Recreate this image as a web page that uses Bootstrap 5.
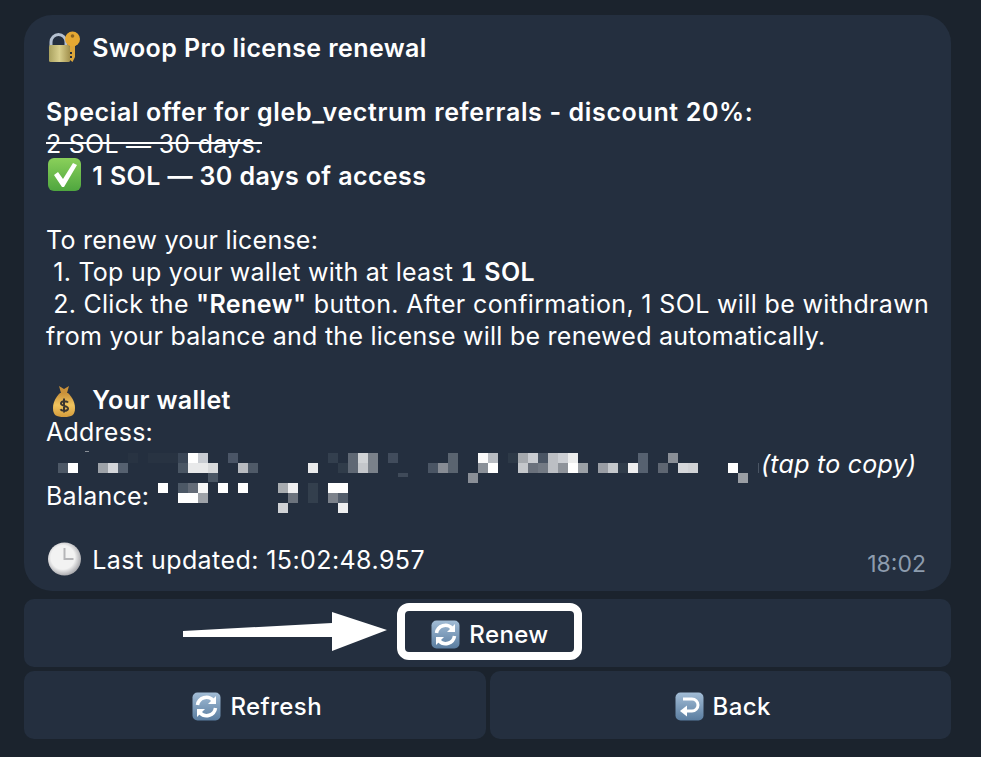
<!DOCTYPE html>
<html lang="en">
<head>
    <meta charset="UTF-8">
    <meta name="viewport" content="width=device-width, initial-scale=1.0">
    <title>Swoop Pro license renewal</title>
    <link href="https://cdn.jsdelivr.net/npm/bootstrap@5.3.0/dist/css/bootstrap.min.css" rel="stylesheet">
    <style>
        body {
            background: #1b232d;
            color: #fff;
            font-family: Inter, "Liberation Sans", sans-serif;
        }
        .chat-wrap {
            padding: 15px 30px 18px 24px;
        }
        .msg-bubble {
            background: #242f3f;
            border-radius: 28px;
            height: 576px;
            padding: 17px 10px 0 22px;
            font-size: 25px;
            line-height: 32px;
            letter-spacing: .25px;
            white-space: pre-wrap;
            margin-bottom: 8px;
        }
        .msg-bubble b {
            font-weight: 600;
            letter-spacing: .4px;
        }
        .msg-bubble b.offer-line {
            letter-spacing: .64px;
        }
        .msg-bubble b.sol-amount {
            font-variant-numeric: tabular-nums;
        }
        .struck {
            background: linear-gradient(#fff, #fff) no-repeat 0 13px / 100% 2px;
        }
        .dash-low {
            vertical-align: -2px;
            line-height: 1;
        }
        .wide-run {
            letter-spacing: .36px;
        }
        .time-run {
            letter-spacing: .42px;
        }
        .emo {
            width: 34px;
            height: 34px;
            margin: -6px 4px -6px 1px;
            vertical-align: -1px;
            overflow: visible;
        }
        .addr-gap {
            display: inline-block;
            width: 715px;
        }
        .msg-time {
            bottom: 15px;
            right: 25px;
            font-size: 23px;
            line-height: 24px;
            letter-spacing: 0;
            color: #8d9cae;
        }
        .mosaic {
            top: 0;
            left: 0;
        }
        .kb-btn {
            height: 68px;
            padding: 10px 12px 6px 17px;
            background: #242f3f;
            border: 0;
            border-radius: 10px;
            color: #fff;
            font-size: 24px;
            font-weight: 500;
            letter-spacing: .4px;
        }
        .kb-icon {
            width: 29px;
            height: 29px;
            margin-right: 9px;
            vertical-align: -6px;
        }
        .hl-box {
            left: 373px;
            top: 4px;
            width: 185px;
            height: 57px;
            border: 8px solid #fff;
            border-radius: 12px;
        }
        .hl-arrow {
            left: 159px;
            top: 13px;
        }
    </style>
</head>
<body>

    <svg width="0" height="0" class="position-absolute">
        <defs>
            <linearGradient id="tileBlue" x1="0" y1="0" x2="0" y2="1">
                <stop offset="0" stop-color="#a3bdd6"/>
                <stop offset="1" stop-color="#5a7da0"/>
            </linearGradient>
            <linearGradient id="brass" x1="0" y1="0" x2="1" y2="0">
                <stop offset="0" stop-color="#a9a15f"/>
                <stop offset=".5" stop-color="#d8cf8e"/>
                <stop offset="1" stop-color="#a3914d"/>
            </linearGradient>
            <linearGradient id="bagGold" x1="0" y1="0" x2="0" y2="1">
                <stop offset="0" stop-color="#c9913a"/>
                <stop offset=".5" stop-color="#f0c45e"/>
                <stop offset="1" stop-color="#d59c3c"/>
            </linearGradient>
            <linearGradient id="checkGreen" x1="0" y1="0" x2="0" y2="1">
                <stop offset="0" stop-color="#8ad05a"/>
                <stop offset="1" stop-color="#4fa63f"/>
            </linearGradient>
            <radialGradient id="clockFace" cx=".45" cy=".45" r=".6">
                <stop offset=".6" stop-color="#f2f2f2"/>
                <stop offset="1" stop-color="#9a9a9f"/>
            </radialGradient>
            <symbol id="icoRefresh" viewBox="0 0 29 29">
                <rect x=".5" y=".5" width="28" height="28" rx="5" fill="url(#tileBlue)"/>
                <path d="M5.500 13a9 9 0 0 1 15.500-4.800" fill="none" stroke="#fff" stroke-width="3.500"/>
                <path d="M23.500 16a9 9 0 0 1-15.500 4.800" fill="none" stroke="#fff" stroke-width="3.500"/>
                <path d="M24 4v8h-8zM5 25v-8h8z" fill="#fff"/>
            </symbol>
        </defs>
    </svg>

    <div class="chat-wrap">
        <div class="msg-bubble position-relative"><svg class="emo" viewBox="0 0 34 34"><path d="M4 16v-4a7.500 7.500 0 0 1 15 0v4" fill="none" stroke="#b4c0d0" stroke-width="3"/><rect x="2" y="15" width="21" height="17" rx="1.500" fill="url(#brass)"/><path d="M23 14h5v13l-2.500 5-2.500-2v-2h2v-2h-2v-2h2v-2h-2z" fill="#dba53a"/><circle cx="25.500" cy="9" r="7.500" fill="#e5a832"/><circle cx="25.500" cy="6" r="1.800" fill="#8c6420"/></svg> <b>Swoop Pro license renewal</b>

<b class="offer-line">Special offer for gleb_vectrum referrals - discount 20%:</b>
<span class="struck">2 SOL <span class="dash-low">—</span> 30 days.</span>
<svg class="emo" viewBox="0 0 34 34"><rect x="1" y="0" width="33" height="33" rx="6" fill="url(#checkGreen)"/><path d="M7 17l4-3 5 7L26 5l4 2-13 22h-2z" fill="#fff"/></svg> <b>1 SOL — 30 days of access</b>

<span>To renew your license:</span>
<span> 1. Top up your wallet with at least </span><b class="sol-amount">1 SOL</b>
<span> 2. Click the </span><b>"Renew"</b><span class="wide-run"> button. After confirmation, 1 SOL will be withdrawn</span>
<span>from your balance and the license will be renewed automatically.</span>

<svg class="emo" viewBox="0 -3 34 34"><path d="M12 1l5 3 5-3-2 7h-6z" fill="#c9913a"/><path d="M13 8h8c4 4 7 9 7 15 0 7-3 9-11 9S6 30 6 23c0-6 3-11 7-15z" fill="url(#bagGold)"/><path d="M21 17.500c-1-1.500-6.500-2-7 .8-.5 3.200 7.500 2 7 5.400-.5 2.800-6.500 2.500-7.500.5M17 13.500v14" fill="none" stroke="#3a3530" stroke-width="2"/></svg> <b>Your wallet</b>
<span>Address:</span>
<span class="addr-gap"></span><em>(tap to copy)</em>
<span>Balance:</span>

<svg class="emo" viewBox="0 0 34 34"><circle cx="17.500" cy="17" r="16.500" fill="url(#clockFace)"/><path d="M17.500 6v11h9" fill="none" stroke="#b5b5b8" stroke-width="2"/></svg> <span class="time-run">Last updated: 15:02:48.957</span><span class="msg-time position-absolute">18:02</span><svg class="mosaic position-absolute" width="927" height="576" viewBox="24 15 927 576">
                <!-- address -->
                <g>
                    <rect x="85" y="451" width="4" height="1" fill="#8a9098"/><rect x="758" y="463" width="1" height="10" fill="#4a5564"/>
                    <rect x="128" y="453" width="10" height="10" fill="#283342"/><rect x="148" y="453" width="30" height="10" fill="#283342"/>
                    <rect x="178" y="453" width="10" height="10" fill="#3a4656"/><rect x="188" y="453" width="10" height="10" fill="#fff"/><rect x="198" y="453" width="10" height="10" fill="#c8ccd2"/>
                    <rect x="228" y="453" width="10" height="10" fill="#4a5566"/><rect x="328" y="453" width="10" height="10" fill="#333f4e"/><rect x="348" y="453" width="10" height="20" fill="#5f6874"/>
                    <rect x="358" y="453" width="10" height="10" fill="#d0d3d6"/><rect x="368" y="453" width="10" height="20" fill="#7a818a"/><rect x="388" y="453" width="10" height="10" fill="#414c5c"/>
                    <rect x="58" y="463" width="10" height="10" fill="#4d5866"/><rect x="68" y="463" width="10" height="10" fill="#fff"/><rect x="98" y="463" width="10" height="10" fill="#9da2a8"/>
                    <rect x="108" y="463" width="10" height="10" fill="#d4d6da"/><rect x="118" y="463" width="10" height="10" fill="#566170"/><rect x="178" y="463" width="10" height="10" fill="#4a5664"/>
                    <rect x="188" y="463" width="20" height="10" fill="#e8e9ea"/><rect x="208" y="463" width="10" height="10" fill="#d8dadc"/><rect x="238" y="463" width="10" height="10" fill="#b8bbc0"/>
                    <rect x="248" y="463" width="10" height="10" fill="#4f5a68"/><rect x="308" y="463" width="10" height="10" fill="#eaebec"/><rect x="338" y="463" width="10" height="10" fill="#303c4a"/>
                    <rect x="358" y="463" width="10" height="10" fill="#c4c7cb"/><rect x="208" y="473" width="10" height="9" fill="#4a5664"/><rect x="398" y="473" width="10" height="4" fill="#3f4a59"/>
                    <rect x="448" y="453" width="10" height="20" fill="#5a6470"/><rect x="478" y="453" width="10" height="10" fill="#fafafa"/><rect x="488" y="453" width="10" height="10" fill="#b8bcc2"/>
                    <rect x="508" y="453" width="10" height="10" fill="#2d3947"/><rect x="518" y="453" width="10" height="10" fill="#a5a9ae"/><rect x="528" y="453" width="10" height="10" fill="#c9ccd1"/>
                    <rect x="538" y="453" width="10" height="10" fill="#4a5564"/><rect x="548" y="453" width="10" height="20" fill="#bcbfc4"/><rect x="558" y="453" width="10" height="10" fill="#cccfd4"/>
                    <rect x="568" y="453" width="10" height="10" fill="#eceded"/><rect x="638" y="453" width="10" height="20" fill="#566170"/><rect x="668" y="453" width="10" height="10" fill="#8a8f97"/>
                    <rect x="428" y="463" width="10" height="10" fill="#4a5564"/><rect x="438" y="463" width="10" height="10" fill="#878c94"/><rect x="478" y="463" width="10" height="10" fill="#8a9098"/>
                    <rect x="488" y="463" width="10" height="10" fill="#fff"/><rect x="518" y="463" width="10" height="10" fill="#c4c7cb"/><rect x="528" y="463" width="10" height="10" fill="#6a717c"/>
                    <rect x="538" y="463" width="10" height="10" fill="#737a84"/><rect x="558" y="463" width="10" height="10" fill="#8e939a"/><rect x="568" y="463" width="10" height="10" fill="#fff"/>
                    <rect x="578" y="463" width="10" height="10" fill="#9ba0a6"/><rect x="598" y="463" width="10" height="10" fill="#999da4"/><rect x="608" y="463" width="10" height="10" fill="#c4c7cb"/>
                    <rect x="618" y="463" width="10" height="10" fill="#303c4a"/><rect x="628" y="463" width="10" height="10" fill="#eeeeef"/><rect x="658" y="463" width="10" height="10" fill="#5e6672"/>
                    <rect x="678" y="463" width="10" height="10" fill="#d5d7da"/><rect x="688" y="463" width="10" height="10" fill="#d0d2d5"/><rect x="728" y="463" width="10" height="10" fill="#fff"/>
                    <rect x="468" y="473" width="10" height="10" fill="#8a8f97"/><rect x="738" y="473" width="10" height="10" fill="#9a9ea4"/>
                </g>
                <!-- balance -->
                <g>
                    <rect x="158" y="483" width="10" height="10" fill="#fff"/><rect x="178" y="483" width="10" height="10" fill="#4c5866"/><rect x="188" y="483" width="10" height="10" fill="#646c78"/>
                    <rect x="198" y="483" width="10" height="10" fill="#f8f8f8"/><rect x="218" y="483" width="10" height="10" fill="#fff"/><rect x="238" y="483" width="10" height="10" fill="#fff"/>
                    <rect x="278" y="483" width="10" height="10" fill="#a8acb0"/><rect x="288" y="483" width="10" height="10" fill="#f0f0f1"/><rect x="308" y="483" width="10" height="20" fill="#333f4d"/>
                    <rect x="328" y="483" width="20" height="10" fill="#fff"/><rect x="178" y="493" width="20" height="10" fill="#fff"/><rect x="198" y="493" width="10" height="10" fill="#9ea2a8"/>
                    <rect x="288" y="493" width="10" height="10" fill="#6c737d"/><rect x="328" y="493" width="10" height="10" fill="#7c828b"/><rect x="338" y="493" width="10" height="10" fill="#535d6b"/>
                    <rect x="278" y="503" width="10" height="10" fill="#d0d2d5"/><rect x="338" y="503" width="10" height="10" fill="#eeeff0"/>
                </g>
            </svg></div>

        <div class="d-flex flex-column gap-1">
            <div class="position-relative">
                <button type="button" class="btn kb-btn w-100"><svg class="kb-icon"><use href="#icoRefresh"/></svg>Renew</button>
                <div class="hl-box position-absolute"></div>
                <svg class="hl-arrow position-absolute" width="230" height="42" viewBox="0 0 230 42">
                    <path d="M0 19L149 11V0L204 18 149 39V25L0 25z" fill="#fff"/>
                </svg>
            </div>
            <div class="d-flex gap-1">
                <button type="button" class="btn kb-btn w-50"><svg class="kb-icon"><use href="#icoRefresh"/></svg>Refresh</button>
                <button type="button" class="btn kb-btn w-50"><svg class="kb-icon" viewBox="0 0 29 29"><rect x=".5" y=".5" width="28" height="28" rx="5" fill="url(#tileBlue)"/><path d="M8 7h9a6 6 0 0 1 0 12h-6" fill="none" stroke="#fff" stroke-width="3"/><path d="M12 13.500v11l-7-5.500z" fill="#fff"/></svg>Back</button>
            </div>
        </div>
    </div>

    <script src="https://cdn.jsdelivr.net/npm/bootstrap@5.3.0/dist/js/bootstrap.bundle.min.js"></script>
</body>
</html>
